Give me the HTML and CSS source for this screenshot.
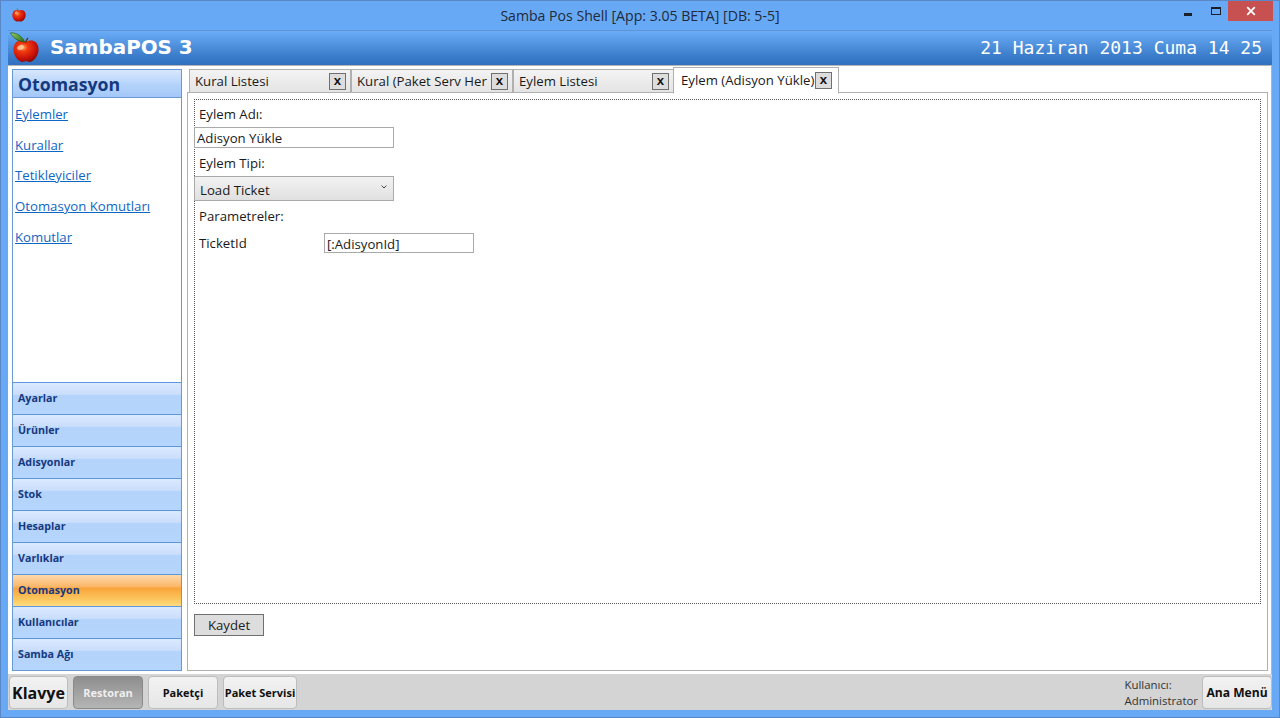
FILE: index.html
```html
<!DOCTYPE html>
<html lang="tr">
<head>
<meta charset="utf-8">
<title>Samba Pos Shell</title>
<link rel="stylesheet" href="styles.css">
</head>
<body>
<div class="window">
  <svg width="0" height="0" class="defs">
    <defs>
      <radialGradient id="apple" cx="38%" cy="32%" r="75%">
        <stop offset="0" stop-color="#ffb060"/>
        <stop offset="0.25" stop-color="#f23c10"/>
        <stop offset="0.7" stop-color="#c81008"/>
        <stop offset="1" stop-color="#7a0804"/>
      </radialGradient>
      <linearGradient id="leaf" x1="0" y1="0" x2="1" y2="1">
        <stop offset="0" stop-color="#9ed060"/>
        <stop offset="1" stop-color="#1c6a20"/>
      </linearGradient>
    </defs>
  </svg>
  <div class="titlebar">
    <div class="title-left">
      <svg class="app-icon" width="16" height="16" viewBox="0 0 16 16">
        <path d="M8 3.600C6.600 2.600 2.200 2.500 1.400 7c-.6 3.600 2.200 7.400 4.400 7.600 1 .1 1.400-.4 2.200-.4s1.200.5 2.200.4c2.200-.2 5-4 4.400-7.600C14 2.500 9.400 2.600 8 3.600z" fill="url(#apple)"/>
        <path d="M7.800 3.600C7.600 2.400 6.800 1.500 5.600 1.200c.6 1.400 1.200 2 2.200 2.400z" fill="#5c8a2c"/>
        <path d="M4 6c.5-1 1.300-1.400 2.200-1.400-.5.7-1 1.400-1.400 2.400z" fill="#ffd8b0"/>
      </svg>
    </div>
    <div class="title-text">Samba Pos Shell [App: 3.05 BETA] [DB: 5-5]</div>
    <div class="window-controls">
      <div class="ctl-min"></div>
      <div class="ctl-max"></div>
      <div class="ctl-close">
        <svg width="10" height="10" viewBox="0 0 10 10"><path d="M1.200 1.200l7.600 7.600M8.800 1.200L1.200 8.800" stroke="#fff" stroke-width="1.800"/></svg>
      </div>
    </div>
  </div>

  <header class="header">
    <div class="brand">
      <svg class="logo" width="34" height="36" viewBox="0 0 34 36">
        <path d="M17 13C13.500 10.500 5 10.500 4.500 20 4 26 9 32.500 13 33c1.500.2 2.500-.7 4-.7s2.500.9 4 .7c4-.5 9-7 8.500-13C29 10.500 20.500 10.500 17 13z" fill="url(#apple)"/>
        <path d="M15.500 13C14 8 8 3.500 1.500 3.800 3.500 8.500 9 12.700 15.500 13z" fill="url(#leaf)" stroke="#184c18" stroke-width=".6"/>
        <path d="M16.500 14c.4-2 1.300-3.500 2.400-5" stroke="#5b3a14" stroke-width="1.300" fill="none"/>
        <ellipse cx="11.500" cy="18.500" rx="3.400" ry="2.400" fill="#ffd7b0" opacity=".75" transform="rotate(-28 11.500 18.500)"/>
      </svg>
      <span class="brand-name">SambaPOS 3</span>
    </div>
    <div class="clock">21 Haziran 2013 Cuma 14 25</div>
  </header>

  <div class="main">
    <aside class="sidebar">
      <h2 class="side-title">Otomasyon</h2>
      <nav class="side-links">
        <a href="#">Eylemler</a>
        <a href="#">Kurallar</a>
        <a href="#">Tetikleyiciler</a>
        <a href="#">Otomasyon Komutları</a>
        <a href="#">Komutlar</a>
      </nav>
      <div class="side-sections">
        <div class="section">Ayarlar</div>
        <div class="section">Ürünler</div>
        <div class="section">Adisyonlar</div>
        <div class="section">Stok</div>
        <div class="section">Hesaplar</div>
        <div class="section">Varlıklar</div>
        <div class="section section-active">Otomasyon</div>
        <div class="section">Kullanıcılar</div>
        <div class="section">Samba Ağı</div>
      </div>
    </aside>

    <section class="workspace">
      <div class="tabs">
        <div class="tab"><span class="tab-label">Kural Listesi</span><span class="tab-x">x</span></div>
        <div class="tab"><span class="tab-label">Kural (Paket Serv Her</span><span class="tab-x">x</span></div>
        <div class="tab tab-narrow"><span class="tab-label">Eylem Listesi</span><span class="tab-x">x</span></div>
        <div class="tab tab-active"><span class="tab-label">Eylem (Adisyon Yükle)</span><span class="tab-x">x</span></div>
      </div>
      <div class="panel">
        <div class="form-frame">
          <div class="label l-name">Eylem Adı:</div>
          <div class="input input-name">Adisyon Yükle</div>
          <div class="label l-type">Eylem Tipi:</div>
          <div class="combo">
            <span>Load Ticket</span>
            <svg class="combo-arrow" width="6" height="4" viewBox="0 0 6 4"><path d="M.6.6L3 3 5.400.6" stroke="#444" fill="none" stroke-width="1"/></svg>
          </div>
          <div class="label l-params">Parametreler:</div>
          <div class="param-row">
            <div class="param-name">TicketId</div>
            <div class="input input-param">[:AdisyonId]</div>
          </div>
        </div>
        <div class="form-actions"><button class="save" type="button">Kaydet</button></div>
      </div>
    </section>
  </div>

  <footer class="bottombar">
    <button class="btn btn-klavye" type="button">Klavye</button>
    <button class="btn btn-dark" type="button">Restoran</button>
    <button class="btn btn-paketci" type="button">Paketçi</button>
    <button class="btn btn-servis" type="button">Paket Servisi</button>
    <div class="user">
      <div>Kullanıcı:</div>
      <div>Administrator</div>
    </div>
    <button class="btn btn-menu" type="button">Ana Menü</button>
  </footer>
</div>
</body>
</html>
```
FILE: styles.css
```css
* { box-sizing: border-box; }
html, body { margin: 0; padding: 0; }
body { width: 1280px; height: 718px; overflow: hidden; font-family: "Open Sans", "Noto Sans", sans-serif; color: #1a1a1a; }
.defs { position: absolute; }

.window {
  width: 1280px; height: 718px;
  display: flex; flex-direction: column;
  background: #68a9f6;
  border: 1px solid #5a88c6;
  padding: 0 7px 7px;
}

.titlebar {
  height: 29px; flex: none;
  display: grid; grid-template-columns: 1fr auto 1fr;
  align-items: start;
  margin: 0 -7px;
  padding: 0 6px;
}
.title-left { padding: 6px 0 0 4px; display: flex; }
.title-text { font-size: 14.1px; line-height: 18px; padding-top: 6px; color: #202a38; }
.window-controls { display: flex; justify-content: flex-end; align-items: flex-start; }
.ctl-min { width: 8px; height: 3px; background: #1b1f27; margin: 12px 19px 0 0; }
.ctl-max { width: 10px; height: 8px; border: 1px solid #1b1f27; border-top-width: 2px; margin: 6px 7px 0 0; }
.ctl-close { width: 45px; height: 20px; background: #c75050; display: flex; align-items: center; justify-content: center; }

.header {
  height: 35px; flex: none;
  display: flex; align-items: center; justify-content: space-between;
  background: linear-gradient(#6bacf7, #3a7cc9 75%, #3171c0);
  border-top: 1px solid #5f95d6;
  padding-right: 10px;
}
.brand { display: flex; align-items: center; height: 100%; }
.logo { margin: -2px 0 0 1px; flex: none; overflow: visible; }
.brand-name { font: bold 19.9px/26px "DejaVu Sans", sans-serif; color: #fff; margin-left: 7px; }
.clock { font: 18px/24px "DejaVu Sans Mono", monospace; color: #fff; }

.main {
  flex: 1; min-height: 0;
  display: flex;
  background: #fff;
  border-top: 1px solid #b5b5b5;
  border-right: 1px solid #b5b5b5;
  padding: 3px 3px 3px 4px;
  gap: 5px;
}

.sidebar {
  width: 170px; flex: none;
  display: flex; flex-direction: column;
  border: 1px solid #6a9ad6;
  background: #fff;
}
.side-title {
  margin: 0; height: 28px; flex: none;
  padding-left: 5px;
  font: bold 17.7px/29px "Open Sans", sans-serif;
  color: #15397f;
  background: linear-gradient(#d8e8fd, #b4d3fb 55%, #a3c8f8);
  border-bottom: 1px solid #6a9ad6;
}
.side-links { flex: 1; display: flex; flex-direction: column; padding: 5.8px 0 0 2px; gap: 10.75px; }
.side-links a { font-size: 13.2px; line-height: 20px; color: #0f66c4; text-decoration: underline; }

.side-sections { flex: none; }
.section {
  height: 32px;
  padding-left: 5px;
  border-top: 1px solid #5c96dc;
  font: bold 10.7px/30px "Open Sans", sans-serif;
  color: #17397f;
  background: linear-gradient(#dbe9fe, #c9defc 37%, #b3d3fb 38%, #b6d5fc);
}
.section-active {
  background: linear-gradient(#fdd9ac, #fbb667 38%, #f9a33a 42%, #fcc860 80%, #fddc82);
}

.workspace { flex: 1; min-width: 0; display: flex; flex-direction: column; }
.tabs { height: 23px; flex: none; display: flex; padding-left: 2px; position: relative; z-index: 1; }
.tab {
  width: 162px; height: 24px; flex: none;
  display: flex; align-items: center; justify-content: space-between;
  padding: 0 4px 0 5px;
  background: linear-gradient(#f3f3f3, #e4e4e4);
  border: 1px solid #b0b0b0;
}
.tab-narrow { width: 161px; }
.tab-label { font-size: 13.2px; line-height: 18px; white-space: nowrap; }
.tab-x {
  width: 17px; height: 17px; flex: none;
  display: flex; align-items: center; justify-content: center;
  border: 1px solid #707070; background: #ddd;
  font: bold 13px/13px "Liberation Mono", monospace; color: #111;
}
.tab-active {
  width: 166px; height: 27px; margin: -2px 0 0 -1px;
  background: #fff; border-bottom-color: #fff;
  padding: 0 6px 1px 7px;
}

.panel {
  flex: 1; min-height: 0;
  display: flex; flex-direction: column;
  border: 1px solid #b0b0b0;
  padding: 6px 6px 34px;
}
.form-frame {
  flex: 1; min-height: 0;
  border: 1px dotted #555;
  display: flex; flex-direction: column;
  align-items: flex-start;
}
.label { font-size: 13.2px; line-height: 18px; padding-left: 4px; }
.l-name { margin-top: 5px; }
.l-type { margin-top: 6px; }
.l-params { margin-top: 6px; }
.input {
  border: 1px solid #aaa; background: #fff;
  font-size: 13.2px; line-height: 18px;
  padding: 1px 0 0 2px; height: 21px;
}
.input-name { width: 200px; margin-top: 4px; margin-left: -1px; }
.combo {
  width: 200px; height: 25px; margin: 4px 0 0 -1px;
  display: flex; align-items: center; justify-content: space-between;
  padding: 2px 6px 0 5px;
  border: 1px solid #aaa;
  background: linear-gradient(#f2f2f2, #e0e0e0);
  font-size: 13.2px;
}
.combo-arrow { margin-top: -6px; }
.param-row { display: flex; align-items: flex-start; margin-top: 8px; padding-left: 4px; }
.param-name { width: 125px; font-size: 13.2px; line-height: 18px; padding-top: 1px; }
.input-param { width: 150px; height: 20px; }

.form-actions { flex: none; padding-top: 10px; }
.save {
  display: block;
  width: 70px; height: 22px; padding: 0;
  border: 1px solid #707070; background: #dddddd;
  font: 13.2px/18px "Open Sans", sans-serif; color: #222;
}

.bottombar {
  height: 36px; flex: none;
  display: flex; align-items: center;
  background: #d4d4d4;
  padding: 1px 0 0 1px;
  gap: 5px;
}
.btn {
  height: 33px; padding: 0;
  border: 1px solid #bdbdbd; border-radius: 4px;
  background: linear-gradient(#f2f2f2, #e6e6e6);
  font: bold 11px/16px "Open Sans", sans-serif; color: #111;
  white-space: nowrap;
}
.btn-klavye { width: 59px; font-size: 16px; }
.btn-dark { width: 70px; color: #efefef; border-color: #8a8a8a; background: linear-gradient(#8e8e8e, #b5b5b5); }
.btn-paketci { width: 70px; }
.btn-servis { width: 74px; }
.btn-menu { width: 70px; font-size: 12.1px; }
.user { margin: 0 -1px 0 auto; padding-top: 1px; font-size: 11.4px; line-height: 16px; color: #333; }
```
